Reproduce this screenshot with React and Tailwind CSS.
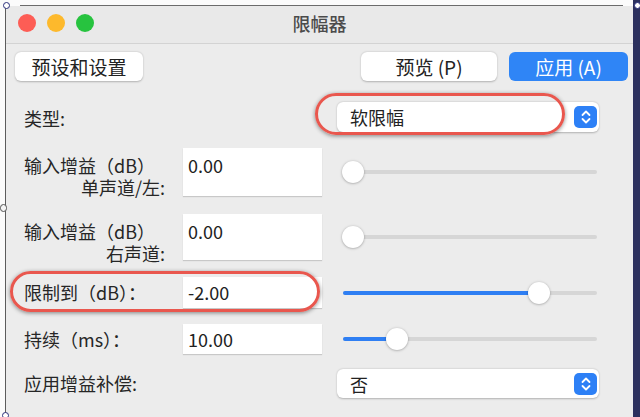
import React from 'react';

function Stepper() {
  return (
    <div className="w-[23px] h-[22px] rounded-[5px] bg-[#2d80f6] flex items-center justify-center">
      <svg width="12" height="16" viewBox="0 0 12 16" fill="none" stroke="white" strokeWidth="1.8" strokeLinecap="round" strokeLinejoin="round">
        <path d="M2.5 6 L6 2.5 L9.5 6" />
        <path d="M2.5 10 L6 13.5 L9.5 10" />
      </svg>
    </div>
  );
}

function Select({ value, h }) {
  return (
    <div className={`w-[262px] ${h} rounded-[6px] bg-white shadow-[0_0.5px_2px_rgba(0,0,0,0.25)] flex items-center pl-[13px] pr-[2px]`}>
      <span className="flex-1 text-[18px] leading-none text-[#222]">{value}</span>
      <Stepper />
    </div>
  );
}

function Slider({ knob, fill }) {
  return (
    <div className="relative ml-[5px] w-[256px] h-[22px]">
      <div className="absolute left-[1px] right-[1px] top-[9px] h-[4px] rounded-full bg-[#d6d6d6]" />
      {fill && (
        <div className="absolute left-[1px] top-[9px] h-[4px] rounded-full bg-[#2f7ff3]" style={{ width: knob + 10 }} />
      )}
      <div
        className="absolute top-0 w-[22px] h-[22px] rounded-full bg-white shadow-[0_0.5px_2.5px_rgba(0,0,0,0.35)]"
        style={{ left: knob }}
      />
    </div>
  );
}

function Input({ value, h, tall }) {
  return (
    <div className={`w-[139px] ${h} bg-white shadow-[0_1px_1px_rgba(0,0,0,0.15)] pl-[5px] text-[18px] text-[#222] ${tall ? 'pt-[6px] leading-[22px]' : 'flex items-center'}`}>
      {value}
    </div>
  );
}

export default function App() {
  return (
    <div className="relative w-[640px] h-[417px] overflow-hidden bg-[#fbfbfb] flex font-['Noto_Sans_CJK_SC','Noto_Sans',sans-serif] text-[#262626]">
      <div className="w-[5px]" />
      <div className="mt-[6px] flex-1 flex flex-col border-l border-[#5c5c5c] bg-[#ececec]">
        {/* title bar */}
        <div className="h-[38px] pb-[4px] grid grid-cols-[1fr_auto_1fr] items-center border-b border-[#d3d3d3] bg-[#e9e9e9]">
          <div className="flex gap-[11px] pl-[12px]">
            <div className="w-[18px] h-[18px] rounded-full bg-[#fd5d55]" />
            <div className="w-[18px] h-[18px] rounded-full bg-[#fdb92c]" />
            <div className="w-[18px] h-[18px] rounded-full bg-[#27c33f]" />
          </div>
          <div className="text-[18px] font-medium text-[#4b4b4b] leading-none">限幅器</div>
          <div />
        </div>

        {/* buttons */}
        <div className="mt-[8px] flex pl-[9px] pr-[5px]">
          <button className="w-[128px] h-[29px] rounded-[6px] bg-white shadow-[0_0.5px_2px_rgba(0,0,0,0.25)] text-[19px] leading-none text-[#222]">预设和设置</button>
          <div className="flex-1" />
          <button className="w-[136px] h-[29px] rounded-[6px] bg-white shadow-[0_0.5px_2px_rgba(0,0,0,0.25)] text-[19px] leading-none text-[#222]">预览 (P)</button>
          <button className="ml-[12px] w-[119px] h-[29px] rounded-[6px] bg-[#2f85f6] text-[19px] leading-none text-white">应用 (A)</button>
        </div>

        <div className="flex flex-col pl-[18px] text-[18px]">
          {/* 类型 */}
          <div className="mt-[21px] h-[30px] flex items-center">
            <div className="w-[141px] pt-[2px]">类型:</div>
            <div className="ml-[18px] w-[139px]" />
            <div className="ml-[15px]"><Select value="软限幅" h="h-[30px]" /></div>
          </div>

          {/* 输入增益 左 */}
          <div className="mt-[16px] h-[48px] flex items-start">
            <div className="w-[141px] pt-[6px] leading-[22px] flex flex-col">
              <span className="self-start">输入增益（dB）</span>
              <span className="self-end">单声道/左:</span>
            </div>
            <div className="ml-[18px]"><Input value="0.00" h="h-[48px]" tall /></div>
            <div className="ml-[15px] h-full flex items-center"><Slider knob={0} /></div>
          </div>

          {/* 输入增益 右 */}
          <div className="mt-[18px] h-[46px] flex items-start">
            <div className="w-[141px] pt-[6px] leading-[22px] flex flex-col">
              <span className="self-start">输入增益（dB）</span>
              <span className="self-end">右声道:</span>
            </div>
            <div className="ml-[18px]"><Input value="0.00" h="h-[46px]" tall /></div>
            <div className="ml-[15px] h-full flex items-center"><Slider knob={0} /></div>
          </div>

          {/* 限制到 */}
          <div className="mt-[17px] h-[31px] flex items-center">
            <div className="w-[141px]">限制到（dB）：</div>
            <div className="ml-[18px]"><Input value="-2.00" h="h-[31px]" /></div>
            <div className="ml-[15px]"><Slider knob={186} fill /></div>
          </div>

          {/* 持续 */}
          <div className="mt-[16px] h-[30px] flex items-center">
            <div className="w-[141px]">持续（ms）：</div>
            <div className="ml-[18px]"><Input value="10.00" h="h-[30px]" /></div>
            <div className="ml-[15px]"><Slider knob={44} fill /></div>
          </div>

          {/* 应用增益补偿 */}
          <div className="mt-[15px] h-[29px] flex items-center">
            <div className="w-[141px]">应用增益补偿:</div>
            <div className="ml-[18px] w-[139px]" />
            <div className="ml-[15px]"><Select value="否" h="h-[29px]" /></div>
          </div>
        </div>
      </div>
      <div className="w-[7px] bg-[#2c305e]" />

      {/* screenshot selection frame */}
      <div className="absolute left-[20px] right-[17px] top-[5px] h-[1px] bg-[#6b6b6b]" />
      <div className="absolute left-[3px] top-[2px] w-[7px] h-[7px] rounded-full border-[1.5px] border-[#2a2f7a] bg-white" />
      <div className="absolute left-[634px] top-[2px] w-[7px] h-[7px] rounded-full border-[1.5px] border-[#2a2f7a] bg-white" />
      <div className="absolute left-[0px] top-[204px] w-[7px] h-[8px] rounded-full border-[1.5px] border-[#555] bg-[#f5f5f5]" />
      <div className="absolute left-[2px] top-[412px] w-[7px] h-[7px] rounded-full border-[1.5px] border-[#2a2f7a] bg-white" />

      {/* red annotation ovals */}
      <div className="absolute left-[315px] top-[93px] w-[250px] h-[42px] rounded-full border-[3px] border-[#e9574e] shadow-[0_1px_4px_rgba(0,0,0,0.45)]" />
      <div className="absolute left-[10px] top-[271px] w-[310px] h-[41px] rounded-full border-[3px] border-[#e9574e] shadow-[0_1px_4px_rgba(0,0,0,0.45)]" />
    </div>
  );
}
